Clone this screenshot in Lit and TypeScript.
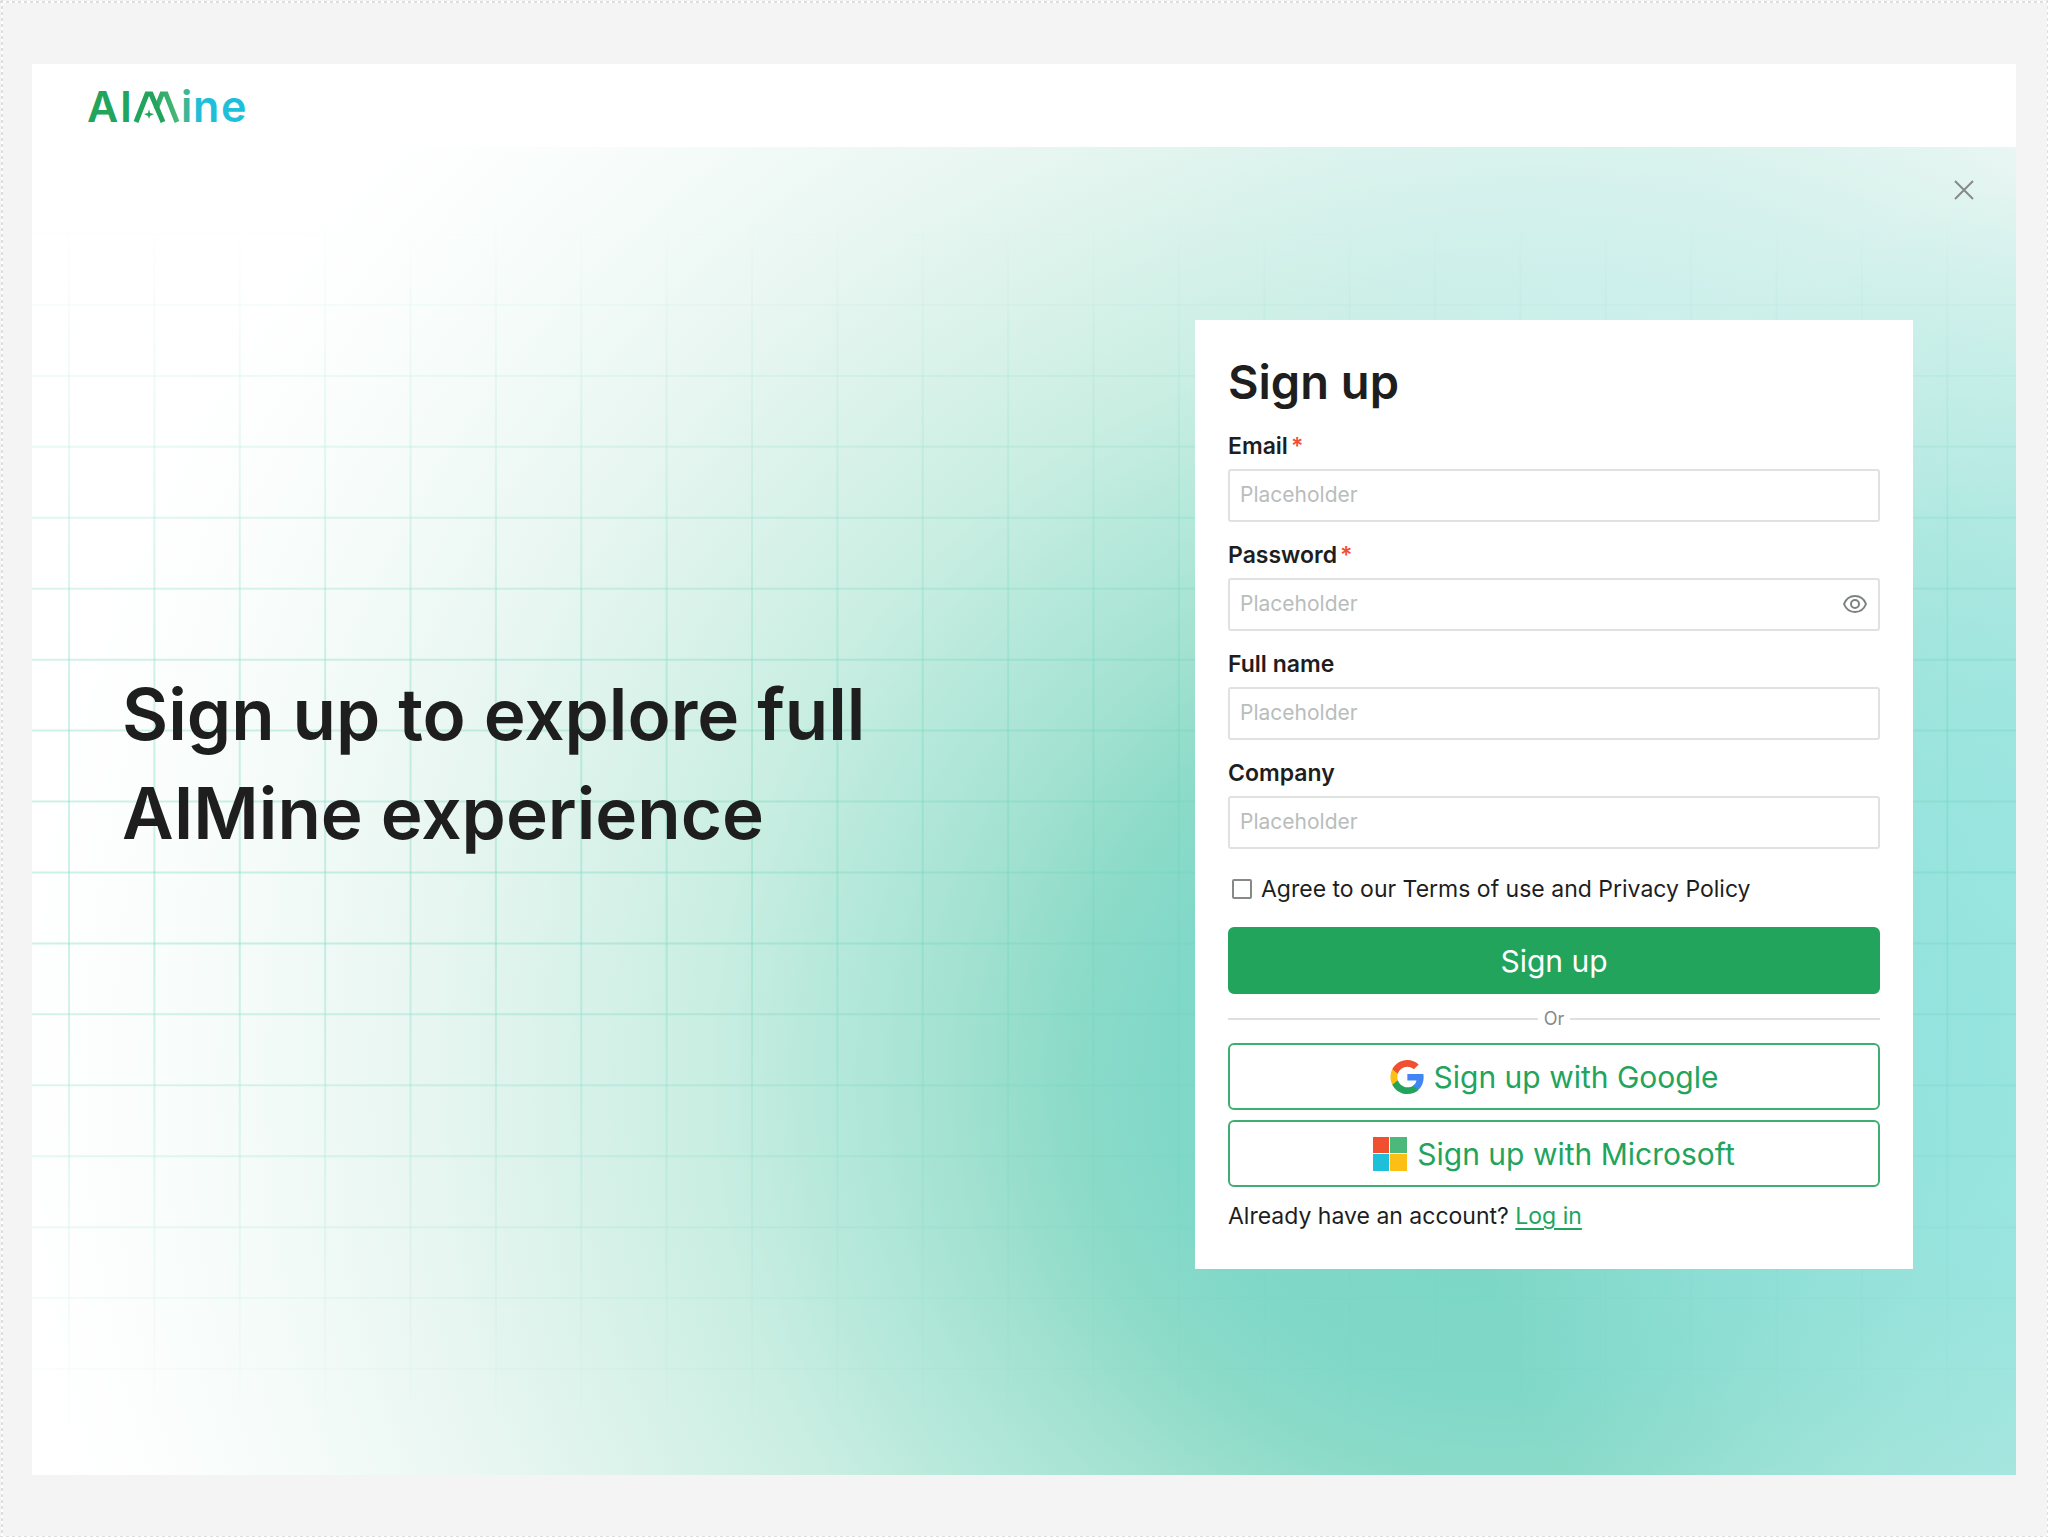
import { LitElement, html, css, svg, nothing } from "lit";
import { customElement, property, state } from "lit/decorators.js";

@customElement("brand-logo")
export class BrandLogo extends LitElement {
  static styles = css`
    :host { display: block; }
    .logo { display: block; width: 160px; height: 40px; overflow: visible; }
    .word { font-family: Inter, "Liberation Sans", sans-serif; font-size: 43px; font-weight: 600; }
    .green { fill: #22a45d; }
    .cyan { fill: #1ec0d9; }
    .stroke { fill: none; stroke-width: 5; stroke-linejoin: miter; }
  `;

  render() {
    return html`
      <svg class="logo" viewBox="0 0 160 40" role="img" aria-label="AIMine">
        <defs>
          <linearGradient id="peak" gradientUnits="userSpaceOnUse" x1="60" y1="0" x2="92" y2="0">
            <stop offset="0" stop-color="#22a45d" />
            <stop offset="1" stop-color="#4cb87a" />
          </linearGradient>
          <linearGradient id="stem" gradientUnits="userSpaceOnUse" x1="94" y1="0" x2="106" y2="0">
            <stop offset="0" stop-color="#43b486" />
            <stop offset="1" stop-color="#2bbcb8" />
          </linearGradient>
        </defs>
        <text class="word green" x="-1" y="34">A</text>
        <text class="word green" x="32" y="34">I</text>
        <path class="stroke" stroke="url(#peak)" d="M68 21 L74 6 L78 6 L89 34" />
        <path class="stroke" stroke="#22a45d" d="M48 34 L59 6 L63 6 L75 34" />
        <path class="green" d="M61 21 L62 25 L66 26 L62 28 L61 31 L60 28 L56 26 L60 25 Z" />
        <text class="word" fill="url(#stem)" x="93" y="34">i</text>
        <text class="word cyan" x="105" y="34">n</text>
        <text class="word cyan" x="133" y="34">e</text>
      </svg>
    `;
  }
}

@customElement("grid-backdrop")
export class GridBackdrop extends LitElement {
  static styles = css`
    :host { display: block; }
    .grid { display: block; width: 100%; height: 100%; }
    .line { stroke: #6fd6bd; stroke-width: 2; stroke-opacity: 0.34; }
  `;

  render() {
    const columns = Array.from({ length: 23 }, (_, i) => 37 + (i * 256) / 3);
    const rows = Array.from({ length: 17 }, (_, i) => 87 + (i * 1135) / 16);
    return html`
      <svg class="grid" viewBox="0 0 1983 1328" preserveAspectRatio="none" aria-hidden="true">
        ${columns.map((x) => svg`<line class="line" x1=${x} y1="40" x2=${x} y2="1290" />`)}
        ${rows.map((y) => svg`<line class="line" x1="0" y1=${y} x2="1983" y2=${y} />`)}
      </svg>
    `;
  }
}

@customElement("form-field")
export class FormField extends LitElement {
  @property() label = "";
  @property() type = "text";
  @property({ type: Boolean }) required = false;
  @state() private revealed = false;

  static styles = css`
    :host { display: block; }
    .field { display: flex; flex-direction: column; gap: 9px; }
    .label { font-size: 23px; line-height: 28px; font-weight: 600; color: #1e1e1e; }
    .mark { color: #f0502f; margin-left: 3px; }
    .box {
      display: flex; align-items: center; height: 53px; box-sizing: border-box;
      border: 2px solid #e0e2e2; border-radius: 3px; background: #fff; padding: 0 10px 2px;
    }
    .input {
      flex: 1; min-width: 0; border: 0; padding: 0; outline: 0; background: none;
      font-family: inherit; font-size: 21px; line-height: 28px; color: #1e1e1e;
    }
    .input::placeholder { color: #b9bdbc; opacity: 1; }
    .eye { border: 0; background: none; padding: 0; display: flex; cursor: pointer; }
    .icon { width: 26px; height: 20px; fill: none; stroke: #7d8281; stroke-width: 2; }
  `;

  render() {
    const secret = this.type === "password";
    return html`
      <div class="field">
        <label class="label" for="control">${this.label}${this.required
          ? html`<span class="mark">*</span>`
          : nothing}</label>
        <div class="box">
          <input
            class="input" id="control" placeholder="Placeholder"
            type=${secret && this.revealed ? "text" : this.type}
            ?required=${this.required}
          />
          ${secret
            ? html`<button class="eye" type="button" aria-label="Show password"
                @click=${() => (this.revealed = !this.revealed)}>
                <svg class="icon" viewBox="0 0 26 20" aria-hidden="true">
                  <path d="M2 10 C4 5 8 2 13 2 S22 5 24 10 C22 15 18 18 13 18 S4 15 2 10 Z" />
                  <circle cx="13" cy="10" r="4" />
                </svg>
              </button>`
            : nothing}
        </div>
      </div>
    `;
  }
}

@customElement("app-root")
export class AppRoot extends LitElement {
  static styles = css`
    :host { display: block; font-family: Inter, "Liberation Sans", sans-serif; color: #1e1e1e; }
    .page {
      box-sizing: border-box; min-height: 100vh; padding: 64px 32px 62px;
      display: flex; flex-direction: column;
      background:
        repeating-linear-gradient(90deg, #dedede 0 3px, #fff 3px 6px) 0 1px / 100% 2px no-repeat,
        repeating-linear-gradient(90deg, #dedede 0 3px, #fff 3px 6px) 0 100% / 100% 1px no-repeat,
        repeating-linear-gradient(#dedede 0 3px, #fff 3px 6px) 1px 0 / 2px 100% no-repeat,
        repeating-linear-gradient(#dedede 0 3px, #fff 3px 6px) 100% 0 / 1px 100% no-repeat,
        #f4f4f4;
    }
    .frame { flex: 1; display: flex; flex-direction: column; background: #fff; }
    .header { padding: 24px 56px 19px; }
    .stage {
      position: relative; flex: 1; display: flex; align-items: center; gap: 48px;
      padding: 173px 103px 206px 90px;
      background:
        radial-gradient(ellipse 26% 22% at 80% 12%, rgba(204, 240, 244, 0.5), rgba(204, 240, 244, 0) 100%),
        radial-gradient(ellipse 32% 64% at 104% 66%, rgba(150, 229, 226, 0.95) 0%, rgba(152, 229, 226, 0.8) 35%, rgba(160, 230, 228, 0.4) 70%, rgba(170, 232, 230, 0) 100%),
        radial-gradient(ellipse 76% 108% at 74% 70%, #78d5c3 0%, #80d8c8 22%, #8ddbc9 29%, #a2e1d0 36%, #b4e8da 44%, #caeee2 53%, #d9f2ea 62%, #e8f6f1 72%, #f4fbf8 83%, #fcfefd 93%, #fff 100%);
    }
    .grid {
      position: absolute; inset: 0;
      mask-image: linear-gradient(transparent 5%, rgba(0, 0, 0, 0.3) 17%, #000 42%, #000 60%, rgba(0, 0, 0, 0.3) 83%, transparent 97%);
    }
    .close {
      position: absolute; top: 32px; right: 41px; display: flex; padding: 0;
      border: 0; background: none; cursor: pointer;
    }
    .cross { width: 22px; height: 22px; fill: none; stroke: #858a89; stroke-width: 2; }
    .headline {
      position: relative; flex: 1; min-width: 0; margin: 0; padding-bottom: 61px;
      font-size: 71px; line-height: 99px; font-weight: 600;
    }
    .line { display: block; }
    .card {
      position: relative; flex: 0 1 718px; box-sizing: border-box; background: #fff;
      padding: 33px 33px 39px; display: flex; flex-direction: column;
    }
    .title { margin: 0 0 21px; font-size: 47px; line-height: 58px; font-weight: 600; }
    .fields { display: flex; flex-direction: column; gap: 19px; }
    .agree {
      display: flex; align-items: center; gap: 9px; margin: 26px 0 24px; padding-left: 4px;
      font-size: 23px; line-height: 28px;
    }
    .tick {
      appearance: none; width: 20px; height: 20px; margin: 0; box-sizing: border-box;
      border: 2px solid #858a89; border-radius: 2px; background: #fff;
    }
    .tick:checked { background: #22a45d; border-color: #22a45d; }
    .button {
      box-sizing: border-box; height: 67px; padding: 0; border: 2px solid #3eaf70; border-radius: 6px;
      display: flex; align-items: center; justify-content: center; gap: 10px; cursor: pointer;
      font-family: inherit; font-size: 30px; line-height: 36px; background: #fff; color: #22a45d;
    }
    .primary { background: #22a45d; border-color: #22a45d; color: #fff; }
    .or {
      display: flex; align-items: center; gap: 6px; height: 49px;
      font-size: 18px; line-height: 20px; color: #858a89;
    }
    .rule { flex: 1; height: 2px; background: #dedfdf; }
    .providers { display: flex; flex-direction: column; gap: 10px; }
    .brand { width: 34px; height: 34px; }
    .login { margin: 15px 0 0; font-size: 23px; line-height: 28px; }
    .link { color: #22a45d; text-underline-offset: 4px; text-decoration-thickness: 2px; }
  `;

  render() {
    return html`
      <div class="page">
        <div class="frame">
          <header class="header"><brand-logo></brand-logo></header>
          <main class="stage">
            <grid-backdrop class="grid"></grid-backdrop>
            <button class="close" type="button" aria-label="Close">
              <svg class="cross" viewBox="0 0 22 22" aria-hidden="true">
                <path d="M2 2 L20 20 M20 2 L2 20" />
              </svg>
            </button>
            <h1 class="headline">
              <span class="line">Sign up to explore full</span>
              <span class="line">AIMine experience</span>
            </h1>
            <form class="card" @submit=${(e: Event) => e.preventDefault()}>
              <h2 class="title">Sign up</h2>
              <div class="fields">
                <form-field label="Email" type="email" required></form-field>
                <form-field label="Password" type="password" required></form-field>
                <form-field label="Full name"></form-field>
                <form-field label="Company"></form-field>
              </div>
              <label class="agree">
                <input class="tick" type="checkbox" />
                <span>Agree to our Terms of use and Privacy Policy</span>
              </label>
              <button class="button primary" type="submit">Sign up</button>
              <div class="or"><span class="rule"></span><span>Or</span><span class="rule"></span></div>
              <div class="providers">
                <button class="button" type="button">
                  <svg class="brand" viewBox="0 0 48 48" aria-hidden="true">
                    <path fill="#4285f4" d="M47.5 24.5c0-1.600-.1-3.200-.4-4.700H24.500v9h12.900c-.6 3-2.300 5.500-4.800 7.200v6h7.700c4.600-4.200 7.200-10.400 7.200-17.500z" />
                    <path fill="#22a45d" d="M24.500 48c6.500 0 11.900-2.100 15.800-5.800l-7.700-6c-2.100 1.400-4.900 2.300-8.100 2.300-6.200 0-11.500-4.200-13.400-9.900H3.200v6.200C7.200 42.600 15.200 48 24.500 48z" />
                    <path fill="#fbbf16" d="M11.100 28.600c-1-3-1-6.200 0-9.200v-6.200H3.200c-3.400 6.800-3.400 14.800 0 21.600z" />
                    <path fill="#f0502f" d="M24.500 9.500c3.400-.1 6.700 1.200 9.200 3.600l6.800-6.800C36.200 2.200 30.400 0 24.500 0 15.200 0 7.200 5.300 3.200 13.200l7.900 6.200c1.900-5.700 7.200-9.900 13.400-9.900z" />
                  </svg>
                  <span>Sign up with Google</span>
                </button>
                <button class="button" type="button">
                  <svg class="brand" viewBox="0 0 34 34" aria-hidden="true">
                    <rect width="16" height="16" fill="#f0502f" />
                    <rect x="17" width="17" height="16" fill="#4cb87a" />
                    <rect y="17" width="16" height="17" fill="#1ec0d9" />
                    <rect x="17" y="17" width="17" height="17" fill="#fbbf16" />
                  </svg>
                  <span>Sign up with Microsoft</span>
                </button>
              </div>
              <p class="login">Already have an account? <a class="link" href="#login">Log in</a></p>
            </form>
          </main>
        </div>
      </div>
    `;
  }
}
